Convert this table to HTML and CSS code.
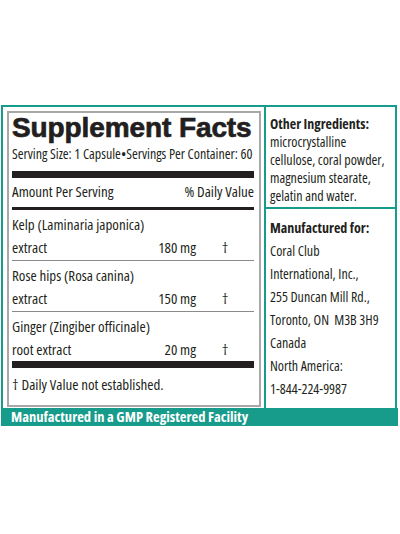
FILE: index.html
```html
<!DOCTYPE html>
<html lang="en">
<head>
    <meta charset="UTF-8">
    <meta name="viewport" content="width=device-width, initial-scale=1.0">
    <title>Supplement Facts - Kelp, Rose hips, Ginger</title>
    <link rel="stylesheet" href="styles.css">
</head>
<body>

<div class="label">
    <div class="main">
        <div class="facts-wrap">
            <div class="facts">
                <h1 class="title">Supplement Facts</h1>
                <div class="serving">Serving Size: 1 Capsule&bull;Servings Per Container: 60</div>
                <div class="bar bar-thick"></div>
                <div class="amount-head">
                    <span>Amount Per Serving</span>
                    <span>% Daily Value</span>
                </div>
                <div class="bar bar-mid"></div>

                <div class="row">
                    <div class="name">Kelp (Laminaria japonica)</div>
                    <div class="line">
                        <span>extract</span>
                        <span class="qty">180 mg</span>
                        <span class="dv">&dagger;</span>
                    </div>
                </div>
                <div class="row">
                    <div class="name">Rose hips (Rosa canina)</div>
                    <div class="line">
                        <span>extract</span>
                        <span class="qty">150 mg</span>
                        <span class="dv">&dagger;</span>
                    </div>
                </div>
                <div class="row last">
                    <div class="name">Ginger (Zingiber officinale)</div>
                    <div class="line">
                        <span>root extract</span>
                        <span class="qty">20 mg</span>
                        <span class="dv">&dagger;</span>
                    </div>
                </div>

                <div class="bar bar-thick"></div>
                <div class="note">&dagger; Daily Value not established.</div>
            </div>
        </div>

        <div class="side">
            <div class="side-block other">
                <div class="side-head">Other Ingredients:</div>
                <div>microcrystalline</div>
                <div>cellulose, coral powder,</div>
                <div>magnesium stearate,</div>
                <div>gelatin and water.</div>
            </div>
            <div class="side-block maker">
                <div class="side-head">Manufactured for:</div>
                <div>Coral Club</div>
                <div>International, Inc.,</div>
                <div>255 Duncan Mill Rd.,</div>
                <div>Toronto, ON&nbsp; M3B 3H9</div>
                <div>Canada</div>
                <div>North America:</div>
                <div>1-844-224-9987</div>
            </div>
        </div>
    </div>
    <div class="band">Manufactured in a GMP Registered Facility</div>
</div>

</body>
</html>
```

FILE: styles.css
```css
body {
    margin: 0;
    background-color: #ffffff;
    font-family: "Open Sans", sans-serif;
    font-stretch: 75%;
    color: #231f20;
}

.label {
    margin: 105px 3px 0 1px;
    border: 2px solid #179b8b;
    border-bottom: none;
}

.main {
    display: flex;
}

.facts-wrap {
    width: 254px;
    padding: 4px 3px 1px 4px;
}

.facts {
    border: 2px solid #a8a8a8;
    padding: 0 5px 10px 3px;
}

.title {
    margin: 0;
    font-family: "Liberation Sans", Arial, sans-serif;
    font-stretch: normal;
    font-size: 28px;
    line-height: 30px;
    font-weight: bold;
    -webkit-text-stroke: 0.7px #231f20;
    letter-spacing: -0.1px;
    white-space: nowrap;
}

.serving {
    font-size: 14px;
    line-height: 22px;
    white-space: nowrap;
}

.bar {
    background-color: #231f20;
}

.bar-thick {
    height: 7px;
    margin-top: 6px;
}

.bar-mid {
    height: 3px;
    margin-top: 5px;
}

.amount-head {
    display: flex;
    justify-content: space-between;
    font-size: 15px;
    line-height: 22px;
    margin-top: 2px;
}

.row {
    font-size: 15px;
    line-height: 23px;
    padding: 3px 0 1px;
    border-bottom: 1px solid #8a8a8a;
}

.row.last {
    border-bottom: none;
    padding-bottom: 0;
}

.row.last + .bar-thick {
    margin-top: 0;
}

.line {
    display: grid;
    grid-template-columns: 1fr auto 58px;
}

.qty {
    text-align: right;
}

.dv {
    text-align: center;
}

.note {
    font-size: 15px;
    line-height: 22px;
    margin-top: 5px;
}

.side {
    flex: 1;
    border-left: 2px solid #179b8b;
    font-size: 14px;
}

.side-block {
    padding-left: 4px;
}

.other {
    line-height: 18px;
    padding-top: 8px;
    padding-bottom: 2px;
    border-bottom: 2px solid #179b8b;
}

.maker {
    line-height: 23px;
    padding-top: 7px;
}

.side-head {
    font-weight: bold;
}

.band {
    margin: 0 -3px 0 -1px;
    background-color: #179b8b;
    color: #ffffff;
    font-weight: bold;
    font-size: 14.5px;
    line-height: 18px;
    padding-left: 9px;
}
```
